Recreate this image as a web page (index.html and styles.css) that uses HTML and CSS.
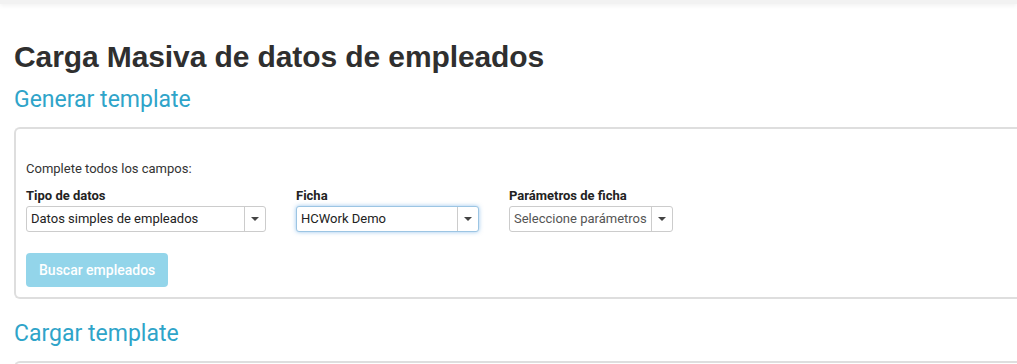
FILE: index.html
```html
<!DOCTYPE html>
<html lang="es">
<head>
    <meta charset="UTF-8">
    <title>Carga Masiva de datos de empleados</title>
    <link rel="stylesheet" href="styles.css">
</head>
<body>
    <div class="topbar"></div>

    <div class="container">
        <h1>Carga Masiva de datos de empleados</h1>

        <h2>Generar template</h2>
        <div class="panel">
            <p class="hint">Complete todos los campos:</p>
            <div class="fields">
                <div class="field field-tipo">
                    <label>Tipo de datos</label>
                    <div class="select">
                        <span class="select-value">Datos simples de empleados</span>
                        <span class="select-toggle"><span class="caret"></span></span>
                    </div>
                </div>
                <div class="field field-ficha">
                    <label>Ficha</label>
                    <div class="select focused">
                        <span class="select-value">HCWork Demo</span>
                        <span class="select-toggle"><span class="caret"></span></span>
                    </div>
                </div>
                <div class="field field-params">
                    <label>Parámetros de ficha</label>
                    <div class="select">
                        <span class="select-value placeholder">Seleccione parámetros</span>
                        <span class="select-toggle"><span class="caret"></span></span>
                    </div>
                </div>
            </div>
            <button class="btn" disabled>Buscar empleados</button>
        </div>

        <h2>Cargar template</h2>
        <div class="panel panel-empty"></div>
    </div>
</body>
</html>
```

FILE: styles.css
```css
* {
    margin: 0;
    padding: 0;
    box-sizing: border-box;
}

body {
    font-family: Roboto, "Liberation Sans", sans-serif;
    background: #fff;
    color: #333;
    overflow: hidden;
}

.topbar {
    height: 4px;
    background: #f2f2f2;
    box-shadow: 0 1px 5px rgba(0, 0, 0, 0.08);
}

.container {
    padding: 35px 0 0 14px;
}

h1 {
    font-family: "Liberation Sans", Arial, sans-serif;
    font-size: 30px;
    font-weight: bold;
    color: #2f2f2f;
    line-height: 36px;
    letter-spacing: -0.1px;
}

h2 {
    font-size: 23px;
    font-weight: 400;
    color: #2fa4c9;
    line-height: 26px;
    margin: 12px 0 14px 0;
}

.panel + h2 {
    margin-top: 22px;
}

.panel {
    border: 2px solid #dedede;
    border-right: none;
    border-radius: 6px 0 0 6px;
    padding: 32px 10px 0 10px;
    height: 172px;
}

.hint {
    font-size: 13px;
    line-height: 16px;
    color: #333;
    margin-bottom: 11px;
}

.fields {
    display: flex;
    gap: 30px;
    margin-bottom: 21px;
}

.field label {
    display: block;
    font-size: 13px;
    font-weight: bold;
    line-height: 15px;
    margin-bottom: 3px;
    color: #222;
}

.field-tipo .select { width: 240px; }
.field-ficha .select { width: 183px; }
.field-params .select { width: 164px; }

.select {
    display: flex;
    height: 26px;
    border: 1px solid #ccc;
    border-radius: 3px;
    background: #fff;
}

.select.focused {
    border-color: #9cc5e3;
    box-shadow: 0 0 4px rgba(70, 150, 220, 0.55);
}

.select-value {
    flex: 1;
    font-size: 13px;
    line-height: 24px;
    padding-left: 4px;
    color: #222;
    white-space: nowrap;
    overflow: hidden;
}

.select-value.placeholder {
    color: #555;
}

.select-toggle {
    width: 21px;
    border-left: 1px solid #ccc;
    display: flex;
    align-items: center;
    justify-content: center;
}

.caret {
    width: 0;
    height: 0;
    border-left: 4px solid transparent;
    border-right: 4px solid transparent;
    border-top: 4px solid #444;
}

.btn {
    font-family: Roboto, "Liberation Sans", sans-serif;
    background: #93d5ea;
    color: #fff;
    border: none;
    border-radius: 4px;
    font-size: 14px;
    font-weight: 500;
    height: 34px;
    padding: 0 13px;
}
```
